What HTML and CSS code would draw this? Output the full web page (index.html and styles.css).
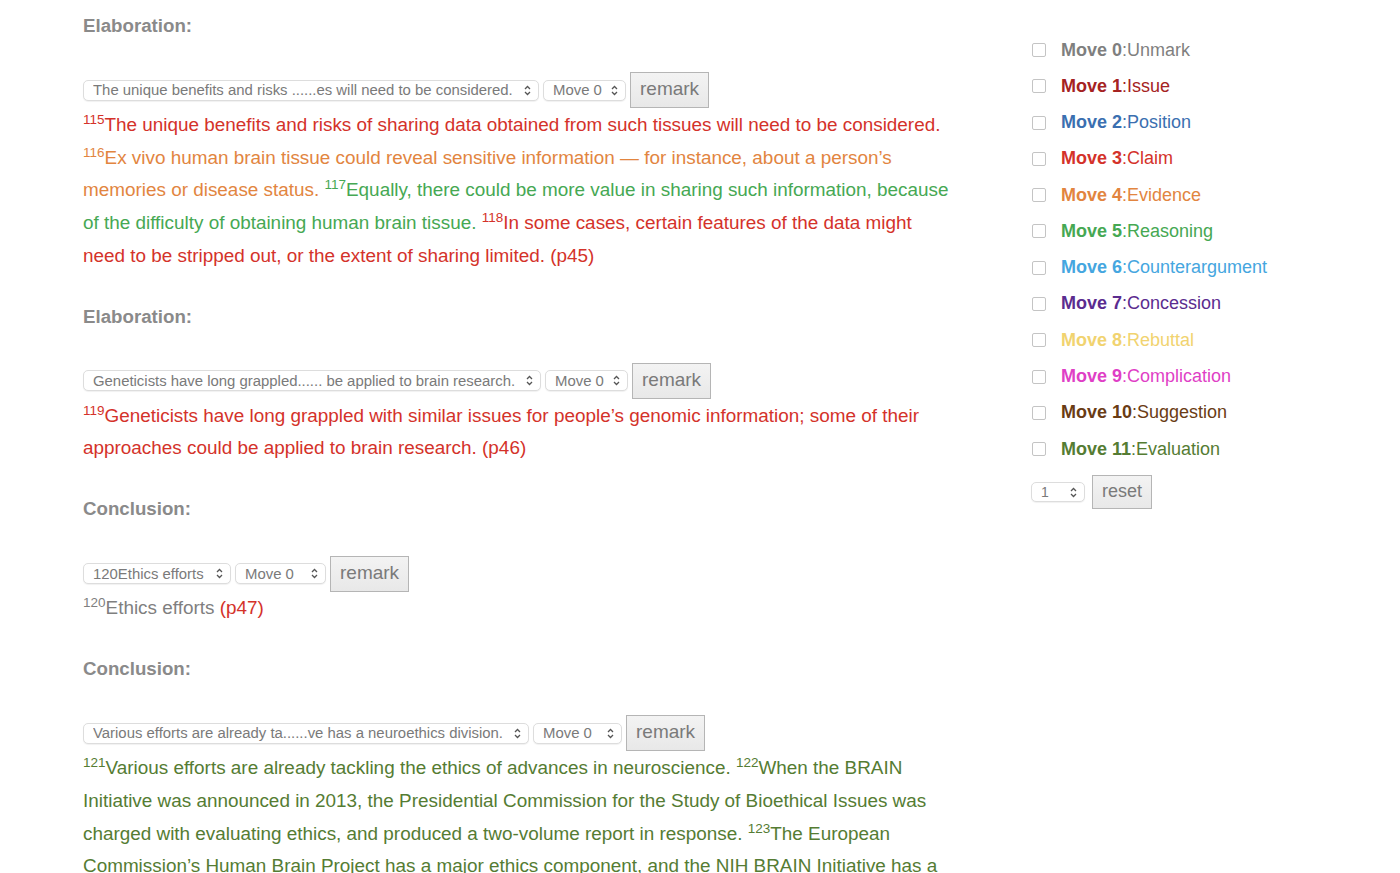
FILE: index.html
```html
<!DOCTYPE html>
<html lang="en">
<head>
<meta charset="utf-8">
<title>Moves</title>
<link rel="stylesheet" href="styles.css">
</head>
<body>
<div class="page">
  <main class="main">
    <section class="block">
      <div class="heading">Elaboration:</div>
      <div class="controls">
        <div class="select w-a"><span class="sel-text">The unique benefits and risks ......es will need to be considered.</span><svg class="chev" width="7" height="11" viewBox="0 0 7 11"><path d="M1 4 L3.5 1.5 L6 4 M1 7 L3.5 9.5 L6 7" fill="none" stroke="#555" stroke-width="1.3"/></svg></div>
        <div class="select w-move"><span class="sel-text">Move 0</span><svg class="chev" width="7" height="11" viewBox="0 0 7 11"><path d="M1 4 L3.5 1.5 L6 4 M1 7 L3.5 9.5 L6 7" fill="none" stroke="#555" stroke-width="1.3"/></svg></div>
        <button class="btn">remark</button>
      </div>
      <p class="para"><span class="m3"><sup>115</sup>The unique benefits and risks of sharing data obtained from such tissues will need to be considered.</span> <span class="m4"><sup>116</sup>Ex vivo human brain tissue could reveal sensitive information — for instance, about a person’s memories or disease status.</span> <span class="m5"><sup>117</sup>Equally, there could be more value in sharing such information, because of the difficulty of obtaining human brain tissue.</span> <span class="m3"><sup>118</sup>In some cases, certain features of the data might need to be stripped out, or the extent of sharing limited.</span> <span class="m3">(p45)</span></p>
    </section>

    <section class="block">
      <div class="heading">Elaboration:</div>
      <div class="controls">
        <div class="select w-b"><span class="sel-text">Geneticists have long grappled...... be applied to brain research.</span><svg class="chev" width="7" height="11" viewBox="0 0 7 11"><path d="M1 4 L3.5 1.5 L6 4 M1 7 L3.5 9.5 L6 7" fill="none" stroke="#555" stroke-width="1.3"/></svg></div>
        <div class="select w-move"><span class="sel-text">Move 0</span><svg class="chev" width="7" height="11" viewBox="0 0 7 11"><path d="M1 4 L3.5 1.5 L6 4 M1 7 L3.5 9.5 L6 7" fill="none" stroke="#555" stroke-width="1.3"/></svg></div>
        <button class="btn">remark</button>
      </div>
      <p class="para"><span class="m3"><sup>119</sup>Geneticists have long grappled with similar issues for people’s genomic information; some of their approaches could be applied to brain research.</span> <span class="m3">(p46)</span></p>
    </section>

    <section class="block">
      <div class="heading">Conclusion:</div>
      <div class="controls">
        <div class="select w-c"><span class="sel-text">120Ethics efforts</span><svg class="chev" width="7" height="11" viewBox="0 0 7 11"><path d="M1 4 L3.5 1.5 L6 4 M1 7 L3.5 9.5 L6 7" fill="none" stroke="#555" stroke-width="1.3"/></svg></div>
        <div class="select w-move2"><span class="sel-text">Move 0</span><svg class="chev" width="7" height="11" viewBox="0 0 7 11"><path d="M1 4 L3.5 1.5 L6 4 M1 7 L3.5 9.5 L6 7" fill="none" stroke="#555" stroke-width="1.3"/></svg></div>
        <button class="btn">remark</button>
      </div>
      <p class="para"><span class="m0"><sup>120</sup>Ethics efforts</span> <span class="m3">(p47)</span></p>
    </section>

    <section class="block">
      <div class="heading">Conclusion:</div>
      <div class="controls">
        <div class="select w-d"><span class="sel-text">Various efforts are already ta......ve has a neuroethics division.</span><svg class="chev" width="7" height="11" viewBox="0 0 7 11"><path d="M1 4 L3.5 1.5 L6 4 M1 7 L3.5 9.5 L6 7" fill="none" stroke="#555" stroke-width="1.3"/></svg></div>
        <div class="select w-move3"><span class="sel-text">Move 0</span><svg class="chev" width="7" height="11" viewBox="0 0 7 11"><path d="M1 4 L3.5 1.5 L6 4 M1 7 L3.5 9.5 L6 7" fill="none" stroke="#555" stroke-width="1.3"/></svg></div>
        <button class="btn">remark</button>
      </div>
      <p class="para"><span class="m11"><sup>121</sup>Various efforts are already tackling the ethics of advances in neuroscience. <sup>122</sup>When the BRAIN Initiative was announced in 2013, the Presidential Commission for the Study of Bioethical Issues was charged with evaluating ethics, and produced a two-volume report in response. <sup>123</sup>The European Commission’s Human Brain Project has a major ethics component, and the NIH BRAIN Initiative has a neuroethics division.</span> <span class="m3">(p47)</span></p>
    </section>
  </main>

  <aside class="side">
    <ul class="legend">
      <li class="item"><span class="box"></span><span class="m0"><b>Move 0</b>:Unmark</span></li>
      <li class="item"><span class="box"></span><span class="m1"><b>Move 1</b>:Issue</span></li>
      <li class="item"><span class="box"></span><span class="m2"><b>Move 2</b>:Position</span></li>
      <li class="item"><span class="box"></span><span class="m3"><b>Move 3</b>:Claim</span></li>
      <li class="item"><span class="box"></span><span class="m4"><b>Move 4</b>:Evidence</span></li>
      <li class="item"><span class="box"></span><span class="m5"><b>Move 5</b>:Reasoning</span></li>
      <li class="item"><span class="box"></span><span class="m6"><b>Move 6</b>:Counterargument</span></li>
      <li class="item"><span class="box"></span><span class="m7"><b>Move 7</b>:Concession</span></li>
      <li class="item"><span class="box"></span><span class="m8"><b>Move 8</b>:Rebuttal</span></li>
      <li class="item"><span class="box"></span><span class="m9"><b>Move 9</b>:Complication</span></li>
      <li class="item"><span class="box"></span><span class="m10"><b>Move 10</b>:Suggestion</span></li>
      <li class="item"><span class="box"></span><span class="m11"><b>Move 11</b>:Evaluation</span></li>
    </ul>
    <div class="reset-row">
      <div class="select w-num"><span class="sel-text">1</span><svg class="chev" width="7" height="11" viewBox="0 0 7 11"><path d="M1 4 L3.5 1.5 L6 4 M1 7 L3.5 9.5 L6 7" fill="none" stroke="#555" stroke-width="1.3"/></svg></div>
      <button class="btn btn-reset">reset</button>
    </div>
  </aside>
</div>
</body>
</html>
```

FILE: styles.css
```css
html, body {
  margin: 0;
  padding: 0;
  background: #ffffff;
}

body {
  font-family: "Liberation Sans", Arial, Helvetica, sans-serif;
  font-size: 18px;
  color: #777777;
}

.page {
  display: flex;
  align-items: flex-start;
  padding-left: 83px;
}

.main {
  width: 868px;
  flex: none;
  padding-top: 14px;
}

.block {
  margin-bottom: 32.2px;
}

.heading {
  font-weight: bold;
  font-size: 18.7px;
  color: #8a8a8a;
  line-height: 24px;
  margin-bottom: 34.3px;
}

.controls {
  display: flex;
  align-items: center;
  gap: 4px;
  height: 36px;
}

.select {
  box-sizing: border-box;
  height: 21px;
  display: flex;
  align-items: center;
  justify-content: space-between;
  padding: 0 7px 0 9px;
  border: 1px solid #dddddd;
  border-radius: 5px;
  background: #ffffff;
  box-shadow: 0 1px 1px rgba(0, 0, 0, 0.06);
  font-size: 14.9px;
  color: #7a7a7a;
  white-space: nowrap;
  overflow: hidden;
}

.sel-text {
  overflow: hidden;
}

.chev {
  flex: none;
  margin-left: 6px;
}

.w-a { width: 456px; }
.w-b { width: 458px; }
.w-c { width: 148px; }
.w-d { width: 446px; }
.w-move { width: 83px; }
.w-move2 { width: 91px; }
.w-move3 { width: 89px; }
.w-num { width: 54px; height: 20px; font-size: 14px; }

.btn {
  box-sizing: border-box;
  height: 36px;
  padding: 0 9px 2px;
  border: 1px solid #b5b5b5;
  background: linear-gradient(#f3f3f3, #e8e8e8);
  color: #7a7a7a;
  font-family: "Liberation Sans", Arial, Helvetica, sans-serif;
  font-size: 19px;
  border-radius: 0;
}

.para {
  margin: 0.7px 0 0;
  font-size: 18.9px;
  line-height: 32.7px;
}

sup {
  font-size: 13.5px;
  vertical-align: super;
  line-height: 0;
}

.m0 { color: #7f7f7f; }
.m1 { color: #a52222; }
.m2 { color: #3b6fb0; }
.m3 { color: #d4322a; }
.m4 { color: #e2853f; }
.m5 { color: #46a853; }
.m6 { color: #45a6e0; }
.m7 { color: #5b2c8f; }
.m8 { color: #f1d370; }
.m9 { color: #df3fc6; }
.m10 { color: #6a3c15; }
.m11 { color: #557c33; }

.side {
  margin-left: 80px;
  padding-top: 32px;
}

.legend {
  list-style: none;
  margin: 0;
  padding: 0;
}

.item {
  height: 36.27px;
  display: flex;
  align-items: center;
}

.box {
  box-sizing: border-box;
  width: 14px;
  height: 14px;
  margin-left: 1px;
  margin-right: 15px;
  border: 1px solid #c4c4c4;
  border-radius: 2px;
  background: #ffffff;
}

.reset-row {
  display: flex;
  align-items: center;
  gap: 7px;
  margin-top: 8px;
}

.btn-reset {
  height: 34px;
  padding: 0 9px 2px;
  font-size: 18px;
}
```
